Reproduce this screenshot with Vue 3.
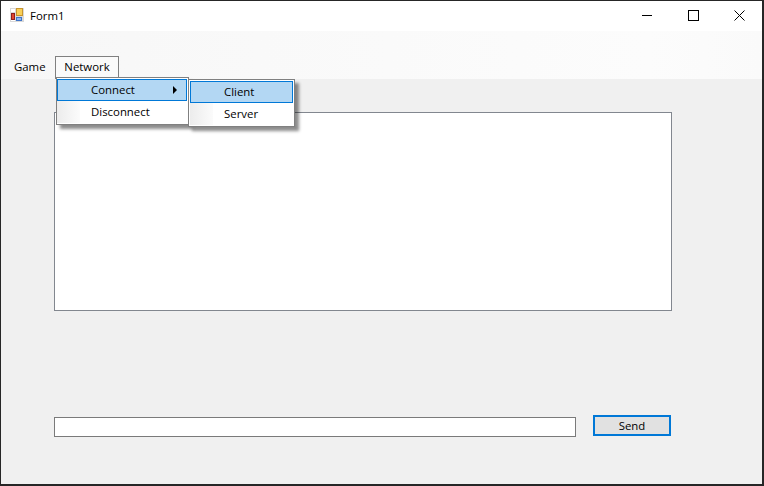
<script setup>
const connectItems = ["Client", "Server"];
</script>
<template>
  <div class="window">
    <header class="titlebar">
      <svg class="app-icon" width="14" height="14" viewBox="0 0 14 14">
        <rect x="0" y="0" width="14" height="14" fill="#d9d9d9" />
        <rect x="1" y="1" width="4" height="3" fill="#fff" />
        <rect x="1" y="12" width="4" height="1" fill="#fff" />
        <rect x="6" y="0" width="7" height="8" fill="#c8952e" />
        <rect x="7" y="1" width="5" height="6" fill="#f8cf58" />
        <rect x="1" y="5" width="4" height="7" fill="#8f1d1d" />
        <rect x="2" y="6" width="2" height="5" fill="#e0452f" />
        <rect x="6" y="9" width="6" height="4" fill="#3f74c9" />
        <rect x="7" y="10" width="4" height="2" fill="#8fb8ee" />
      </svg>
      <span class="title">Form1</span>
      <div class="controls">
        <button class="ctl">
          <svg width="11" height="11" viewBox="0 0 11 11"><path d="M0 5.5h10" stroke="#000" fill="none" /></svg>
        </button>
        <button class="ctl">
          <svg width="11" height="11" viewBox="0 0 11 11"><rect x="0.5" y="0.5" width="10" height="10" stroke="#000" fill="none" /></svg>
        </button>
        <button class="ctl">
          <svg width="11" height="11" viewBox="0 0 11 11"><path d="M0.5 0.5l10 10M10.5 0.5l-10 10" stroke="#000" fill="none" /></svg>
        </button>
      </div>
    </header>

    <nav class="menustrip">
      <span class="menu-item game">Game</span>
      <div class="menu-open">
        <span class="menu-item active">Network</span>
        <div class="dropdown first">
          <div class="drop-row selected">
            <span class="gutter"></span>
            <span class="label">Connect</span>
            <span class="arrow"></span>
          </div>
          <div class="drop-row">
            <span class="gutter"></span>
            <span class="label">Disconnect</span>
          </div>
          <div class="dropdown second">
            <div
              v-for="(item, i) in connectItems"
              :key="item"
              class="drop-row"
              :class="{ selected: i === 0 }"
            >
              <span class="gutter"></span>
              <span class="label">{{ item }}</span>
            </div>
          </div>
        </div>
      </div>
    </nav>

    <main class="content">
      <div class="output"></div>
      <div class="send-row">
        <div class="input"></div>
        <button class="send">Send</button>
      </div>
    </main>
  </div>
</template>
<style>
html,
body {
  margin: 0;
  background: #f0f0f0;
}
</style>
<style scoped>
.window {
  width: 764px;
  height: 486px;
  box-sizing: border-box;
  border: solid #262626;
  border-width: 1px 2px 2px 1px;
  background: #f0f0f0;
  display: flex;
  flex-direction: column;
  font-family: "Open Sans", "Noto Sans", sans-serif;
  font-size: 11.4px;
  color: #000;
  overflow: hidden;
}
.titlebar {
  height: 30px;
  background: #fff;
  display: flex;
  align-items: center;
  padding-left: 9px;
}
.app-icon {
  margin-right: 6px;
  margin-top: -2px;
}
.title {
  margin-top: -1px;
}
.controls {
  margin-left: auto;
  display: flex;
  margin-top: -1px;
}
.ctl {
  width: 46px;
  height: 30px;
  border: none;
  background: none;
  padding: 0;
  display: flex;
  align-items: center;
  justify-content: center;
}
.menustrip {
  height: 48px;
  box-sizing: border-box;
  background: linear-gradient(to right, #f7f7f7, #fcfcfc 85%, #fafafa);
  display: flex;
  align-items: flex-end;
}
.menu-item {
  height: 23px;
  box-sizing: border-box;
  padding: 0 0 2px;
  display: flex;
  align-items: center;
}
.game {
  width: 54px;
  padding-left: 13px;
}
.menu-open {
  position: relative;
}
.active {
  border: 1px solid #808080;
  border-bottom: none;
  background: #fafafa;
  width: 64px;
  padding-bottom: 3px;
  justify-content: center;
}
.dropdown {
  position: absolute;
  box-sizing: border-box;
  background: #fff;
  border: 1px solid #808080;
  box-shadow: 4px 4px 3px rgba(0, 0, 0, 0.45);
  z-index: 2;
}
.first {
  left: 1px;
  top: 21px;
  width: 133px;
  height: 48px;
  padding: 1px 1px 0 0;
}
.second {
  left: 131px;
  top: 1px;
  width: 107px;
  height: 48px;
  padding: 1px;
}
.drop-row {
  height: 22px;
  box-sizing: border-box;
  display: flex;
  align-items: center;
  position: relative;
}
.label {
  margin-top: -2px;
}
.gutter {
  width: 23px;
  height: 100%;
  flex-shrink: 0;
  margin-right: 11px;
  background: linear-gradient(to right, #ececec, #fbfbfb);
}
.selected {
  background: #b3d7f3;
  border: 1px solid #0078d7;
}
.selected .gutter {
  background: none;
  width: 22px;
}
.arrow {
  position: absolute;
  right: 9px;
  top: 6px;
  width: 0;
  height: 0;
  border-left: 4px solid #000;
  border-top: 4px solid transparent;
  border-bottom: 4px solid transparent;
}
.content {
  flex: 1;
  display: flex;
  flex-direction: column;
  padding-left: 53px;
}
.output {
  margin-top: 33px;
  width: 618px;
  height: 199px;
  box-sizing: border-box;
  background: #fff;
  border: 1px solid #82878f;
}
.send-row {
  margin-top: 104px;
  display: flex;
  align-items: flex-start;
}
.input {
  margin-top: 2px;
  width: 522px;
  height: 20px;
  box-sizing: border-box;
  background: #fff;
  border: 1px solid #7a7a7a;
}
.send {
  margin-left: 17px;
  width: 78px;
  height: 21px;
  box-sizing: border-box;
  background: #e1e1e1;
  border: 2px solid #0078d7;
  font: inherit;
  color: #000;
  padding: 0;
}
</style>
